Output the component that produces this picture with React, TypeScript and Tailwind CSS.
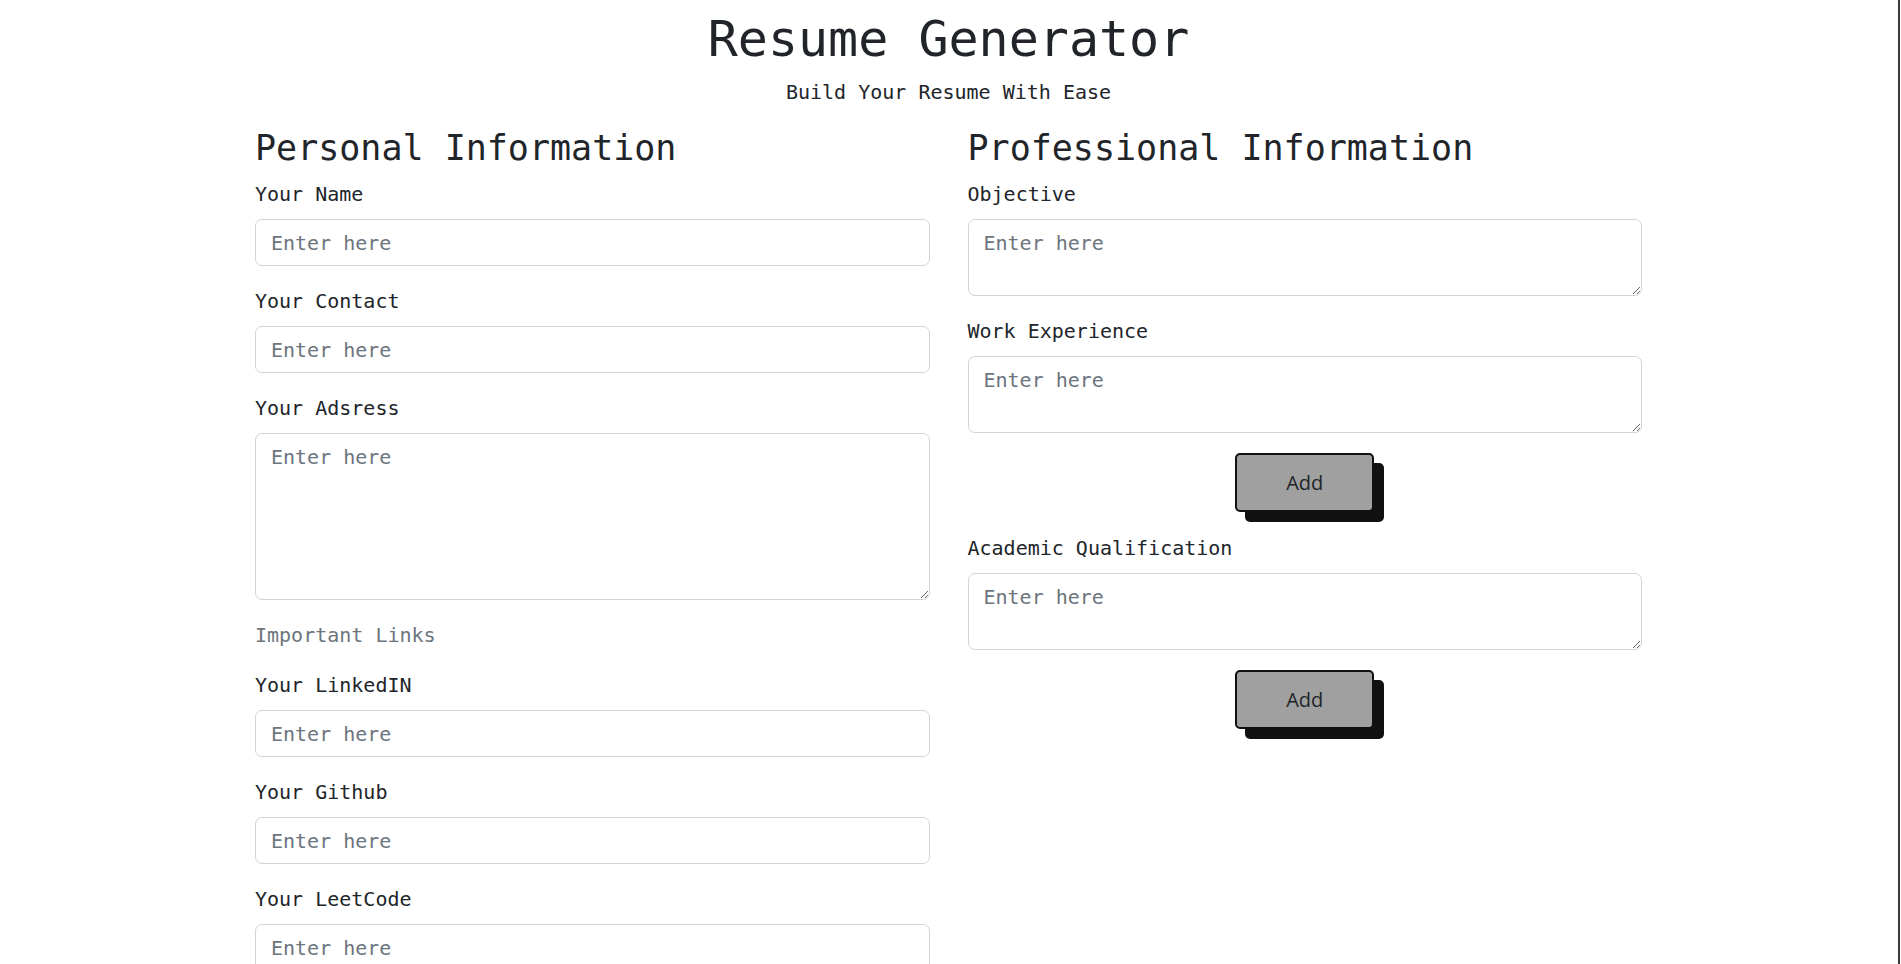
import React from "react";

const mono = "font-['DejaVu_Sans_Mono','Liberation_Mono',monospace]";

function Field({ label, rows }: { label: string; rows?: number }) {
  return (
    <div className="mb-[20px]">
      <label className="block text-[20px] leading-[30px] mb-[10px] text-[#212529]">{label}</label>
      {rows ? (
        <textarea
          rows={rows}
          placeholder="Enter here"
          className={`block w-full ${rows === 5 ? "h-[167px]" : "h-[77px]"} px-[15px] py-[7.5px] text-[20px] leading-[30px] border border-[#ced4da] rounded-[7px] bg-white text-[#212529] placeholder:text-[#6c757d] outline-none`}
        />
      ) : (
        <input
          type="text"
          placeholder="Enter here"
          className="block w-full h-[47px] px-[15px] py-[7.5px] text-[20px] leading-[30px] border border-[#ced4da] rounded-[7px] bg-white text-[#212529] placeholder:text-[#6c757d] outline-none"
        />
      )}
    </div>
  );
}

function AddButton() {
  return (
    <div className="flex justify-center mb-[21px]">
      <button className="w-[139px] h-[59px] bg-[#a0a0a0] border-2 border-[#111] rounded-[5px] shadow-[10px_10px_0_0_#111] text-[20px] text-[#212529] font-['Open_Sans','Noto_Sans',sans-serif]">
        Add
      </button>
    </div>
  );
}

export default function App() {
  return (
    <div className={`h-[964px] overflow-hidden flex bg-white text-[#212529] ${mono}`}>
      <div className="flex-1">
        <h1 className="pt-[9px] text-center text-[50px] leading-[60px] font-normal">Resume Generator</h1>
        <p className="mt-[8px] text-center text-[20px] leading-[30px]">Build Your Resume With Ease</p>

        <div className="mx-auto mt-[20px] w-[1387px] grid grid-cols-2 gap-x-[38px]">
          <div>
            <h2 className="text-[35px] leading-[42px] mb-[10px] font-normal">Personal Information</h2>
            <Field label="Your Name" />
            <Field label="Your Contact" />
            <Field label="Your Adsress" rows={5} />
            <p className="text-[20px] leading-[30px] mb-[20px] text-[#6c757d]">Important Links</p>
            <Field label="Your LinkedIN" />
            <Field label="Your Github" />
            <Field label="Your LeetCode" />
          </div>
          <div>
            <h2 className="text-[35px] leading-[42px] mb-[10px] font-normal">Professional Information</h2>
            <Field label="Objective" rows={2} />
            <Field label="Work Experience" rows={2} />
            <AddButton />
            <Field label="Academic Qualification" rows={2} />
            <AddButton />
          </div>
        </div>
      </div>
      <div className="w-[4px] flex justify-center">
        <div className="w-[2px] bg-[#3a3a3a]" />
      </div>
    </div>
  );
}
